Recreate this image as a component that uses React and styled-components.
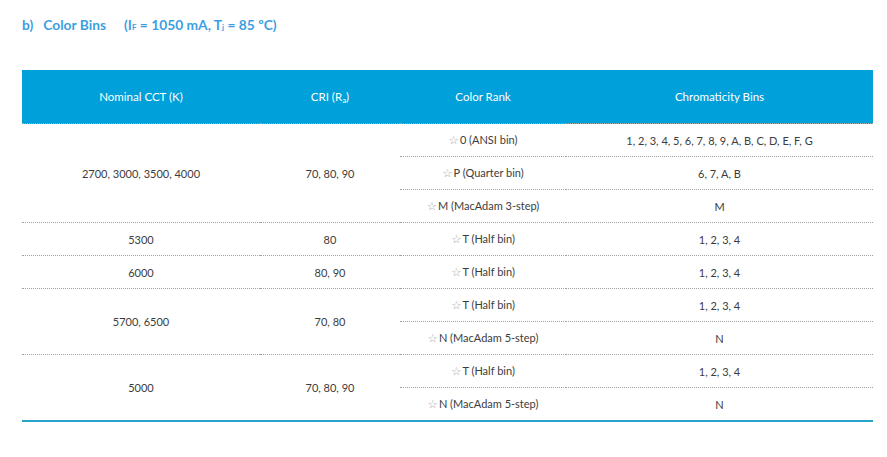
import React from 'react';
import styled, {createGlobalStyle} from 'styled-components';

const Global = createGlobalStyle`
body {
  margin: 0;
  background: #fff;
  font-family: Lato, "Open Sans", sans-serif;
}
`

const Page = styled.div`
padding: 16px 22px 0 22px;
`

const Title = styled.h2`
margin: 0 0 37px 0;
font-size: 13.8px;
font-weight: 700;
color: #3d9fe2;
display: flex;
align-items: baseline;
height: 17px;
line-height: 17px;
`

const TitleGap = styled.span`
display: inline-block;
width: ${p => p.w}px;
`

const Sub = styled.sub`
font-size: 8px;
vertical-align: -2px;
line-height: 0;
`

const Table = styled.table`
width: 851px;
border-collapse: collapse;
table-layout: fixed;
font-size: 11px;
color: #3c3c3c;
border-bottom: 2px solid #2ba2c8;
`

const Head = styled.th`
background: #00a0da;
color: #fff;
font-weight: 400;
font-size: 11.5px;
height: 53px;
padding: 0;
text-align: center;
border-bottom: 1px dotted #9aa;
`

const Cell = styled.td`
height: 32px;
padding: 0;
text-align: center;
vertical-align: middle;
border-top: ${p => (p.first ? 'none' : '1px dotted #a0a0a0')};
`

const Star = styled.span`
color: #a9a9a9;
font-family: "DejaVu Sans", sans-serif;
font-size: 11.5px;
margin-right: 1px;
`

const groups = [
  {cct: '2700, 3000, 3500, 4000', cri: '70, 80, 90', ranks: [
    ['0 (ANSI bin)', '1, 2, 3, 4, 5, 6, 7, 8, 9, A, B, C, D, E, F, G'],
    ['P (Quarter bin)', '6, 7, A, B'],
    ['M (MacAdam 3-step)', 'M'],
  ]},
  {cct: '5300', cri: '80', ranks: [['T (Half bin)', '1, 2, 3, 4']]},
  {cct: '6000', cri: '80, 90', ranks: [['T (Half bin)', '1, 2, 3, 4']]},
  {cct: '5700, 6500', cri: '70, 80', ranks: [
    ['T (Half bin)', '1, 2, 3, 4'],
    ['N (MacAdam 5-step)', 'N'],
  ]},
  {cct: '5000', cri: '70, 80, 90', ranks: [
    ['T (Half bin)', '1, 2, 3, 4'],
    ['N (MacAdam 5-step)', 'N'],
  ]},
];

function App() {
  return (
    <Page>
      <Global />
      <Title>
        b)<TitleGap w={10} />Color Bins<TitleGap w={18} />
        (I<Sub>F</Sub>&nbsp;= 1050 mA, T<Sub>j</Sub>&nbsp;= 85 ºC)
      </Title>
      <Table>
        <colgroup>
          <col style={{width: 238}} />
          <col style={{width: 140}} />
          <col style={{width: 166}} />
          <col style={{width: 307}} />
        </colgroup>
        <thead>
          <tr>
            <Head>Nominal CCT (K)</Head>
            <Head>CRI (R<Sub>a</Sub>)</Head>
            <Head>Color Rank</Head>
            <Head>Chromaticity Bins</Head>
          </tr>
        </thead>
        <tbody>
          {groups.map((g, gi) =>
            g.ranks.map((r, ri) => (
              <tr key={gi + '-' + ri}>
                {ri === 0 && (
                  <>
                    <Cell first={gi === 0} rowSpan={g.ranks.length}>{g.cct}</Cell>
                    <Cell first={gi === 0} rowSpan={g.ranks.length}>{g.cri}</Cell>
                  </>
                )}
                <Cell first={gi === 0 && ri === 0}><Star>☆</Star>{r[0]}</Cell>
                <Cell first={gi === 0 && ri === 0}>{r[1]}</Cell>
              </tr>
            ))
          )}
        </tbody>
      </Table>
    </Page>
  );
}

export default App;
